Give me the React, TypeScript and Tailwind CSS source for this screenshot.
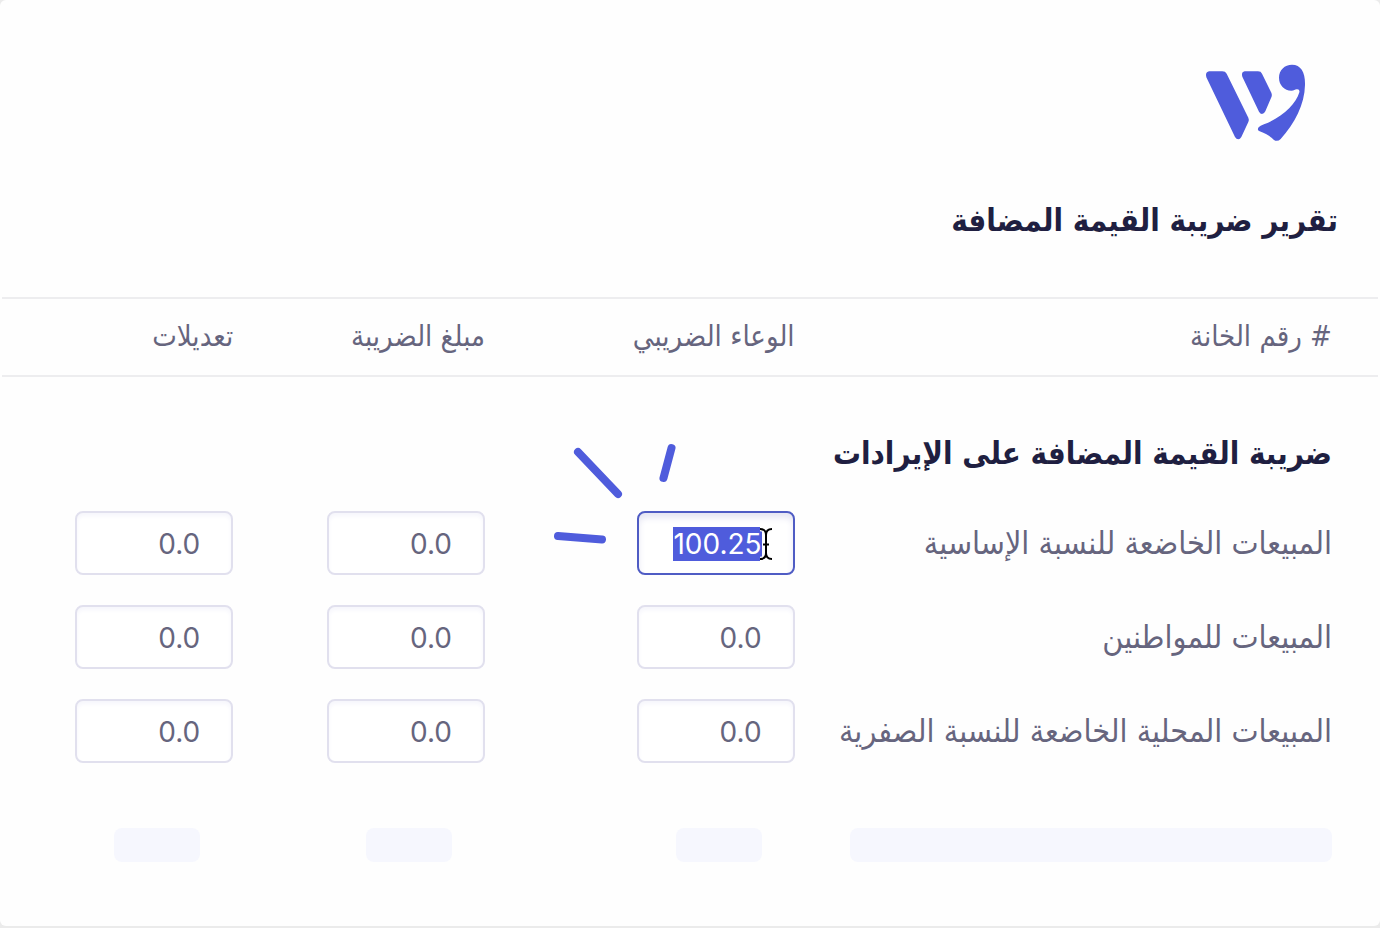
import { useEffect, useRef } from 'react';

type Row = { id: string; label: string; values: [string, string, string] };

const columns = ['الوعاء الضريبي', 'مبلغ الضريبة', 'تعديلات'];

const rows: Row[] = [
  { id: 'standard', label: 'المبيعات الخاضعة للنسبة الإساسية', values: ['100.25', '0.0', '0.0'] },
  { id: 'citizens', label: 'المبيعات للمواطنين', values: ['0.0', '0.0', '0.0'] },
  { id: 'zero', label: 'المبيعات المحلية الخاضعة للنسبة الصفرية', values: ['0.0', '0.0', '0.0'] },
];

function Logo() {
  return (
    <svg viewBox="75 39 306 240" className="h-20 w-[102px]" fill="#4f5cdc" aria-hidden="true">
      <path d="M87 64H127Q136 64 140 71L205 203Q208 209 205 216L184 261Q180 268 175 268Q169 268 165 261L79 82Q75 66 87 64Z" />
      <path d="M194 64H234Q243 64 246 71L274 128Q277 135 274 142L256 184Q252 192 246 192Q241 192 237 185L187 80Q183 66 194 64Z" />
      <path d="M336 44C363 44 376 67 375 105C374 164 344 220 302 267Q292 277 281 269C269 258 257 250 239 244Q230 240 236 232Q240 228 252 223C306 202 348 163 358 127Q360 117 350 118C345 119 342 122 334 122C313 122 297 105 297 83C297 60 314 44 336 44Z" />
    </svg>
  );
}

function Rays() {
  return (
    <svg
      viewBox="0 0 140 110"
      className="pointer-events-none absolute -top-[73px] -left-[87px] h-[110px] w-[140px]"
      fill="none"
      stroke="#4f5cdc"
      strokeWidth="8"
      strokeLinecap="round"
      aria-hidden="true"
    >
      <path d="M28 14L68 56M121.500 10L113.500 40M8 98L52 101.500" />
    </svg>
  );
}

function TextCursor() {
  const d = 'M2 2C6 2 8 4 8 8V26C8 30 6 32 2 32M14 2C10 2 8 4 8 8M14 32C10 32 8 30 8 26M5 17.500H11';
  return (
    <svg
      viewBox="0 0 16 34"
      className="pointer-events-none absolute top-4 right-[21px] h-[34px] w-4"
      fill="none"
      aria-hidden="true"
    >
      <path d={d} stroke="#fff" strokeWidth="4.500" />
      <path d={d} stroke="#000" strokeWidth="2" />
    </svg>
  );
}

function Field({ value, label, active }: { value: string; label: string; active: boolean }) {
  const ref = useRef<HTMLInputElement>(null);
  useEffect(() => {
    if (active) {
      ref.current?.focus();
      ref.current?.select();
    }
  }, [active]);
  return (
    <div className="relative w-[158px]">
      <input
        ref={ref}
        dir="ltr"
        inputMode="decimal"
        aria-label={label}
        defaultValue={value}
        className="block h-16 w-full rounded-lg border-2 border-[#e1e0ee] bg-white pt-0.5 pr-[31px] text-right font-['Inter',sans-serif] text-[28px] text-[#66657e] shadow-[inset_0_3px_4px_#f6f6fc] outline-none selection:bg-[#4f5cdc] selection:text-white focus:border-[#4f5cc4] focus:shadow-[inset_0_5px_6px_#e6e6f3]"
      />
      {active && <Rays />}
      {active && <TextCursor />}
    </div>
  );
}

export default function App() {
  return (
    <div dir="rtl" className="flex min-h-screen flex-col bg-[#ebebeb] pb-0.5 font-['DejaVu_Sans_Condensed','DejaVu_Sans',sans-serif] text-[#66657e]">
      <main className="grow rounded-md bg-[#fefefe] px-0.5">
        <header className="pt-[63px] pb-[52px]">
          <div className="pr-[71px]">
            <Logo />
          </div>
          <h1 className="mt-[52px] pr-10 text-[31px] leading-[50px] font-bold text-[#1f1f41]">
            تقرير ضريبة القيمة المضافة
          </h1>
        </header>
        <table className="w-full table-fixed border-collapse text-right">
          <colgroup>
            <col className="w-[42.4%]" />
            <col className="w-[22.5%]" />
            <col className="w-[18.3%]" />
            <col className="w-[16.8%]" />
          </colgroup>
          <thead>
            <tr className="h-[78px] border-y-2 border-[#ededef] text-[29px] whitespace-nowrap">
              <th scope="col" className="pr-[46px] font-normal"># رقم الخانة</th>
              {columns.map((c) => (
                <th key={c} scope="col" className="font-normal">{c}</th>
              ))}
            </tr>
          </thead>
          <tbody>
            <tr>
              <th scope="rowgroup" colSpan={4} className="h-[120px] pt-8 pr-[46px] text-[31px] leading-[50px] font-bold text-[#1f1f41]">
                ضريبة القيمة المضافة على الإيرادات
              </th>
            </tr>
            {rows.map((row, r) => (
              <tr key={row.id} className="h-[94px]">
                <th scope="row" className="pr-[46px] text-[32px] font-normal whitespace-nowrap">
                  {row.label}
                </th>
                {row.values.map((v, i) => (
                  <td key={columns[i]}>
                    <Field value={v} label={`${row.label} - ${columns[i]}`} active={r === 0 && i === 0} />
                  </td>
                ))}
              </tr>
            ))}
            <tr className="h-[134px]" aria-hidden="true">
              <td className="pr-[46px] pl-[55px]">
                <div className="h-[34px] rounded-lg bg-[#f6f7fe]" />
              </td>
              {columns.map((c) => (
                <td key={c} className="pr-[33px]">
                  <div className="h-[34px] w-[86px] rounded-lg bg-[#f6f7fe]" />
                </td>
              ))}
            </tr>
          </tbody>
        </table>
      </main>
    </div>
  );
}
